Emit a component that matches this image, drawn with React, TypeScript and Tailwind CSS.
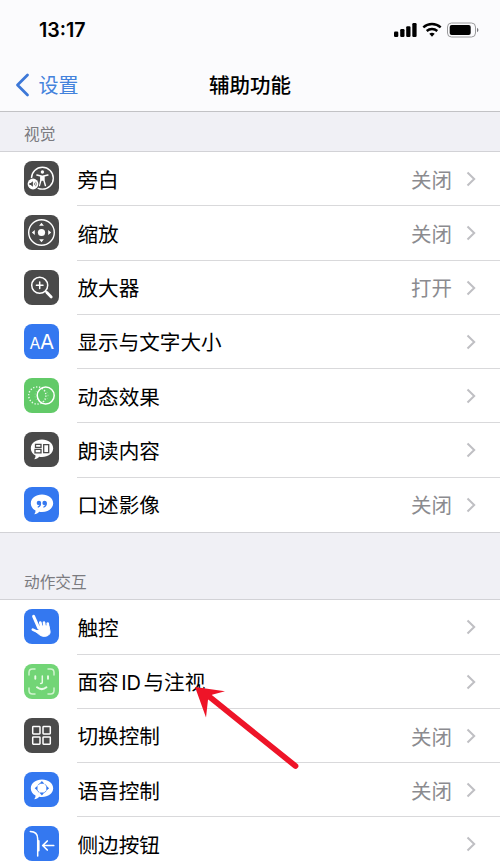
import type { ReactNode } from 'react';

type Item = {
  label: ReactNode;
  value?: string;
  color: string;
  icon: ReactNode;
};

const bubble =
  'M18 7.5c6.200 0 11.200 3.800 11.200 8.700S24.200 25 18 25c-1 0-1.900-.1-2.800-.3-1.200 1.300-2.900 2.400-5 2.600 1-1.100 1.400-2.300 1.300-3.700C8.600 22 6.800 19.300 6.800 16.200 6.800 11.300 11.800 7.500 18 7.500z';

const VoiceOverIcon = () => (
  <>
    <circle cx="18.400" cy="17.200" r="10.900" fill="none" stroke="#fff" strokeWidth="1.400" />
    <circle cx="18.400" cy="11" r="1.700" fill="#fff" />
    <path
      d="M12.900 14.100l4 .8v4.500l-1.500 5.200M23.900 14.100l-4 .8v4.500l1.500 5.200"
      fill="none"
      stroke="#fff"
      strokeWidth="1.500"
      strokeLinecap="round"
      strokeLinejoin="round"
    />
    <path d="M16.600 14.400h3.600v5.300h-3.600z" fill="#fff" />
    <circle cx="9" cy="23" r="6.300" fill="#4a4a4a" />
    <circle cx="9" cy="23" r="5.400" fill="#fff" />
    <path d="M5.400 22h1.400l2.100-1.700v5.400L6.800 24H5.400z" fill="#4a4a4a" />
    <path d="M10.200 21.800q.8 1.200 0 2.400M11.600 20.800q1.500 2.200 0 4.400" fill="none" stroke="#4a4a4a" strokeWidth=".7" />
  </>
);

const ZoomIcon = () => (
  <>
    <circle cx="17.500" cy="17.500" r="12.800" fill="none" stroke="#fff" strokeWidth="1.400" />
    <circle cx="17.500" cy="17.500" r="3.600" fill="#fff" />
    <path
      d="M17.500 7.800l2.400 3h-4.800zM17.500 27.200l2.400-3h-4.800zM7.800 17.500l3-2.400v4.800zM27.200 17.500l-3-2.400v4.800z"
      fill="#fff"
    />
  </>
);

const MagnifierIcon = () => (
  <g fill="none" stroke="#fff" strokeLinecap="round">
    <circle cx="15.700" cy="15.300" r="8" strokeWidth="1.500" />
    <path d="M12.400 15.300H19M15.700 12v6.600" strokeWidth="1.500" />
    <path d="M21.500 21.200l1.500 1.500" strokeWidth="1.500" />
    <path d="M22.900 22.600l4.300 4.300" strokeWidth="2.800" />
  </g>
);

const TextSizeIcon = () => (
  <g fill="#fff" fontFamily="Inter, 'Liberation Sans', sans-serif">
    <text x="5.500" y="24.500" fontSize="15.800">
      A
    </text>
    <text x="15.900" y="24.500" fontSize="20.500">
      A
    </text>
  </g>
);

const MotionIcon = () => (
  <g fill="none" stroke="#fff">
    <circle cx="13.300" cy="17.500" r="8.600" strokeWidth="1.500" strokeDasharray="1.300 1.700" opacity=".85" />
    <circle cx="17.500" cy="17.500" r="6.500" strokeWidth=".8" strokeDasharray=".8 2.200" opacity=".5" />
    <circle cx="21.700" cy="17.500" r="8.500" strokeWidth="1.500" />
  </g>
);

const SpokenIcon = () => (
  <>
    <path d={bubble} fill="#fff" />
    <path
      d="M11.500 12.400H17v3h-5.500zM11 17.400h6v3.400h-6zM19.700 12.700h5v7.900h-5z"
      fill="none"
      stroke="#4a4a4a"
      strokeWidth="1.300"
    />
  </>
);

const DescriptionIcon = () => (
  <>
    <path d={bubble} fill="#fff" />
    <g fill="#3478f0">
      <circle cx="14.900" cy="15.900" r="2.200" />
      <circle cx="20.600" cy="15.900" r="2.200" />
    </g>
    <path
      d="M16.400 16q.4 2.700-2.200 4M22.100 16q.4 2.700-2.200 4"
      fill="none"
      stroke="#3478f0"
      strokeWidth="1.300"
      strokeLinecap="round"
    />
  </>
);

const TouchIcon = () => (
  <g fill="#fff" stroke="#fff" strokeLinecap="round" strokeLinejoin="round">
    <path d="M9.600 7.400l5.200 11.800" strokeWidth="3" fill="none" />
    <path d="M16.300 13.600l1 4M20 13.600l.6 4M23.700 14.700l.5 4" strokeWidth="2.700" fill="none" />
    <path d="M8.800 20.600l5.400 2.600" strokeWidth="2.600" fill="none" />
    <path
      d="M14.200 17.200l10.600-.4 1.200 5c.6 2.600-.8 4.300-3 5.100-2.900 1-5.700.4-7.800-1.400l-4.400-3.800 4.800-.2z"
      strokeWidth="1"
    />
  </g>
);

const FaceIdIcon = () => (
  <g fill="none" stroke="#e8fbe6" strokeLinecap="round" strokeLinejoin="round">
    <path
      d="M5 11V8.500C5 6 6 5 8.500 5H11M24 5h2.500C29 5 30 6 30 8.500V11M30 24v2.500c0 2.500-1 3.500-3.500 3.500H24M11 30H8.500C6 30 5 29 5 26.500V24"
      strokeWidth="1.500"
      opacity=".8"
    />
    <path d="M11.300 12.300v2.500M24 12.300v2.500" strokeWidth="1.900" />
    <path d="M18.300 12v6.200q0 1.400-1.700 1.200" strokeWidth="1.500" />
    <path d="M13 23.300q4.700 3.600 9.400 0" strokeWidth="2" />
  </g>
);

const SwitchIcon = () => (
  <g fill="none" stroke="#fff" strokeWidth="1.500">
    <rect x="8.700" y="8.600" width="7.300" height="7.300" rx=".7" />
    <rect x="19" y="8.600" width="7.300" height="7.300" rx=".7" />
    <rect x="8.700" y="18.900" width="7.300" height="7.300" rx=".7" />
    <rect x="19" y="18.900" width="7.300" height="7.300" rx=".7" />
  </g>
);

const VoiceControlIcon = () => (
  <>
    <path d={bubble} fill="#fff" />
    <path
      d="M17.900 9l2.500 2.800h-5zM17.900 23.400l2.500-2.800h-5zM10.700 16.200l2.800-2.500v5zM25.100 16.200l-2.800-2.500v5z"
      fill="#3478f0"
    />
    <circle
      cx="17.900"
      cy="16.200"
      r="5"
      fill="none"
      stroke="#3478f0"
      strokeWidth=".8"
      strokeDasharray="2.600 5.254"
      strokeDashoffset="-2.627"
    />
  </>
);

const SideButtonIcon = () => (
  <g fill="none" stroke="#fff" strokeLinecap="round" strokeLinejoin="round">
    <path d="M6.300 5.600c5 0 7.400 1.900 7.400 7.300V30" strokeWidth="1.500" />
    <path d="M14.600 15v9.500" strokeWidth="2" />
    <path d="M29.700 19.500H19M23.300 15l-4.600 4.500 4.600 4.500" strokeWidth="1.700" />
  </g>
);

const visionItems: Item[] = [
  { label: '旁白', value: '关闭', color: 'bg-[#4a4a4a]', icon: <VoiceOverIcon /> },
  { label: '缩放', value: '关闭', color: 'bg-[#4a4a4a]', icon: <ZoomIcon /> },
  { label: '放大器', value: '打开', color: 'bg-[#4a4a4a]', icon: <MagnifierIcon /> },
  { label: '显示与文字大小', color: 'bg-[#3478f0]', icon: <TextSizeIcon /> },
  { label: '动态效果', color: 'bg-[#62ca68]', icon: <MotionIcon /> },
  { label: '朗读内容', color: 'bg-[#4a4a4a]', icon: <SpokenIcon /> },
  { label: '口述影像', value: '关闭', color: 'bg-[#3478f0]', icon: <DescriptionIcon /> },
];

const motorItems: Item[] = [
  { label: '触控', color: 'bg-[#3478f0]', icon: <TouchIcon /> },
  {
    label: (
      <>
        面容<span className="mx-[2.500px] font-[Inter,sans-serif] text-[20px]">ID</span>与注视
      </>
    ),
    color: 'bg-[#72d576]',
    icon: <FaceIdIcon />,
  },
  { label: '切换控制', value: '关闭', color: 'bg-[#4a4a4a]', icon: <SwitchIcon /> },
  { label: '语音控制', value: '关闭', color: 'bg-[#3478f0]', icon: <VoiceControlIcon /> },
  { label: '侧边按钮', color: 'bg-[#3478f0]', icon: <SideButtonIcon /> },
];

function Row({ item, last }: { item: Item; last: boolean }) {
  return (
    <li className="flex h-[54.250px] items-center pl-6">
      <span className={`mb-px size-[35px] shrink-0 overflow-hidden rounded-lg ${item.color}`}>
        <svg viewBox="0 0 35 35" className="size-full">
          {item.icon}
        </svg>
      </span>
      <div
        className={`ml-[18px] flex h-full flex-1 items-center border-b pt-px pr-6 ${last ? 'border-transparent' : 'border-[#d9d9db]'}`}
      >
        <span className="flex-1 pl-[0.500px] text-[20.600px] text-black">{item.label}</span>
        {item.value && <span className="text-[20.500px] text-[#8b8b8f]">{item.value}</span>}
        <svg viewBox="0 0 10 16" className="ml-[14px] h-4 w-2.5" fill="none">
          <path d="M1.500 1.500L8.200 8l-6.700 6.500" stroke="#bfbfc3" strokeWidth="2" />
        </svg>
      </div>
    </li>
  );
}

function Section({ items }: { items: Item[] }) {
  return (
    <ul className="border-y border-[#d2d2d6] bg-white">
      {items.map((item, i) => (
        <Row key={i} item={item} last={i === items.length - 1} />
      ))}
    </ul>
  );
}

function StatusBar() {
  return (
    <div className="flex h-[60px] items-center justify-between pr-[21px] pl-[39px]">
      <span className="pt-px font-[Inter,sans-serif] text-[19.600px] font-semibold text-black">13:17</span>
      <svg viewBox="0 0 86 16" className="h-4 w-[86px]">
        <g fill="#000">
          <rect x="1" y="9.500" width="4.300" height="5.500" rx="1.200" />
          <rect x="7.200" y="7" width="4.300" height="8" rx="1.200" />
          <rect x="13.200" y="4.300" width="4.300" height="10.700" rx="1.200" />
          <rect x="19.300" y="1" width="4.300" height="14" rx="1.200" />
        </g>
        <g fill="none" stroke="#000" strokeWidth="2.400">
          <path d="M30.300 5.300a13.200 13.200 0 0 1 17.400 0" />
          <path d="M33.700 9a8.200 8.200 0 0 1 10.600 0" />
        </g>
        <path d="M36.300 11.800a4.200 4.200 0 0 1 5.400 0L39 14.700z" fill="#000" />
        <rect x="54.500" y="1" width="28" height="14" rx="4" fill="none" stroke="#9a9a9c" />
        <rect x="56.700" y="3" width="21" height="10" rx="2" fill="#000" />
        <path d="M84 5.800c1.900.8 1.900 3.600 0 4.400z" fill="#77777a" />
      </svg>
    </div>
  );
}

export default function App() {
  return (
    <div className="relative h-[865px] w-[500px] overflow-hidden bg-[#f0f0f5] font-['Noto_Sans_CJK_SC',sans-serif]">
      <header className="h-28 border-b border-[#c2c2c5] bg-[#fbfbfd]">
        <StatusBar />
        <div className="grid h-[49px] grid-cols-3 items-center">
          <button className="flex items-center pl-[15px] text-[20px] text-[#4382dc]">
            <svg viewBox="0 0 15 24" className="mr-[8.500px] h-6 w-[15px]" fill="none">
              <path
                d="M12.500 2L2.500 12l10 10"
                stroke="#3d78d8"
                strokeWidth="2.800"
                strokeLinecap="round"
                strokeLinejoin="round"
              />
            </svg>
            设置
          </button>
          <h1 className="text-center text-[20.500px] font-medium text-black">辅助功能</h1>
        </div>
      </header>

      <h2 className="flex h-[39px] items-center pt-1 pl-6 text-[15.700px] text-[#7b7b80]">视觉</h2>
      <Section items={visionItems} />

      <h2 className="flex h-[66.500px] items-end pb-[6px] pl-6 text-[15.700px] text-[#7b7b80]">动作交互</h2>
      <Section items={motorItems} />

      <svg viewBox="0 0 110 90" className="absolute top-[682px] left-[192px] h-[90px] w-[110px]">
        <path d="M14 12L103.500 84" stroke="#ee1428" strokeWidth="5.700" strokeLinecap="round" />
        <path d="M3 5l30 4.300-13 3.500-4 5-2 17.700z" fill="#ee1428" />
      </svg>
    </div>
  );
}
